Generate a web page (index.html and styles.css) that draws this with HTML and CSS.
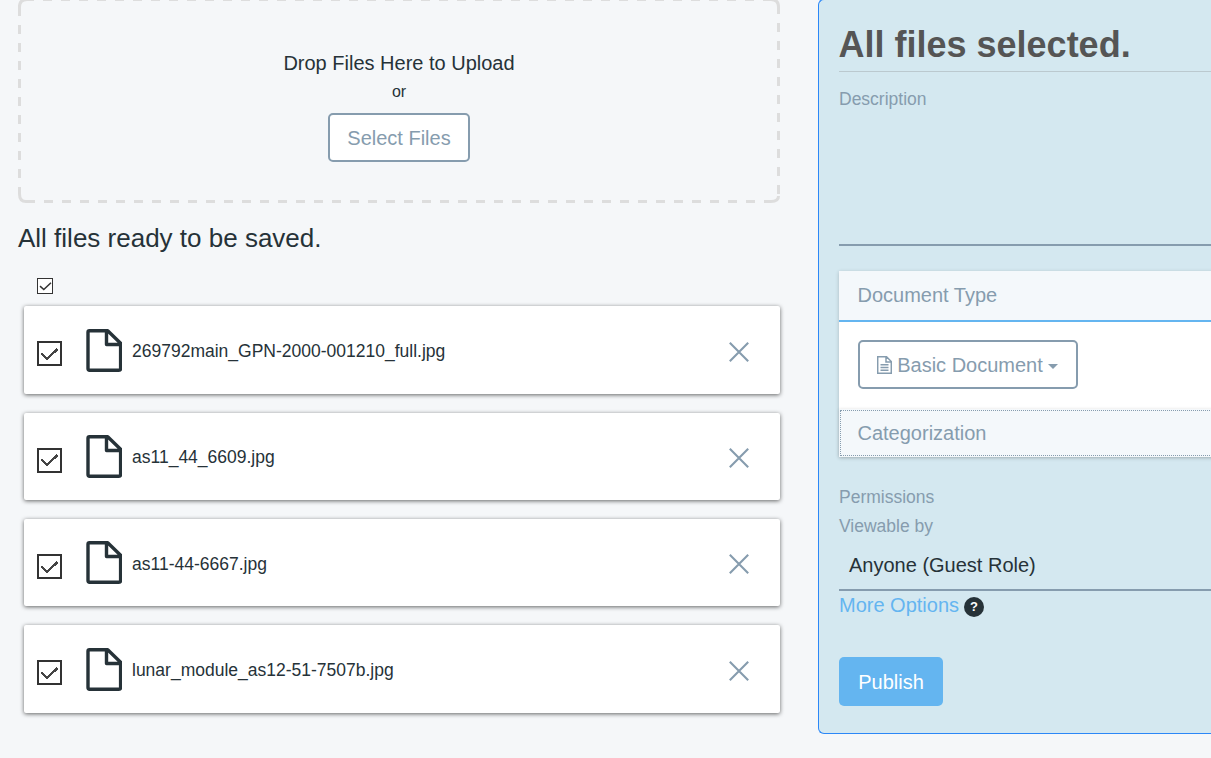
FILE: index.html
```html
<!DOCTYPE html>
<html lang="en">
<head>
<meta charset="utf-8">
<title>Upload files</title>
<link rel="stylesheet" href="styles.css">
</head>
<body>
<svg class="defs" width="0" height="0" aria-hidden="true">
  <symbol id="doc" viewBox="0 0 36 43">
    <path d="M3 1.700H21.700L34.600 14.300V39.500Q34.600 41.200 32.900 41.200H3.700Q2 41.200 2 39.500V3.200Q2 1.700 3.500 1.700ZM20.500 2V15.500H34" fill="none" stroke="#263238" stroke-width="3.400" stroke-linejoin="round"/>
  </symbol>
  <symbol id="tick" viewBox="0 0 19 13">
    <path d="M1.500 6L7 11L17.500 1" fill="none" stroke="#333" stroke-width="2.200"/>
  </symbol>
  <symbol id="tick-large" viewBox="0 0 19 13">
    <path d="M1.500 5.500L7 11L17.500 1" fill="none" stroke="#444" stroke-width="2.400" shape-rendering="crispEdges"/>
  </symbol>
  <symbol id="cross" viewBox="0 0 20 20">
    <path d="M.8.8L19.200 19.200M19.200.8L.8 19.200" fill="none" stroke="#869cae" stroke-width="2.100"/>
  </symbol>
</svg>
<div class="page">
  <main class="uploads">
    <section class="dropzone">
      <svg class="dashes" width="762" height="205" viewBox="0 0 762 205" fill="none" stroke="#ddd" stroke-width="3" aria-hidden="true">
        <path d="M1.500 7V9Q1.500 1.500 9 1.500H16M1.500 9V18M745 1.500H753Q760.500 1.500 760.500 9V16M1.500 189V196Q1.500 203.500 8 203.500M746 203.500H753Q760.500 203.500 760.500 198"/>
        <path d="M25 1.500H745M8 203.500H746M1.500 27V189M760.500 25V197" stroke-dasharray="9 9"/>
      </svg>
      <p class="drop-title">Drop Files Here to Upload</p>
      <p class="drop-or">or</p>
      <button class="btn">Select Files</button>
    </section>
    <h2 class="status">All files ready to be saved.</h2>
    <span class="check-all"><svg width="13" height="9"><use href="#tick"/></svg></span>
    <ul class="files">
      <li class="file"><span class="check"><svg width="19" height="13"><use href="#tick-large"/></svg></span><svg class="doc" width="36" height="43"><use href="#doc"/></svg><span class="name">269792main_GPN-2000-001210_full.jpg</span><svg class="remove" width="20" height="20"><use href="#cross"/></svg></li>
      <li class="file"><span class="check"><svg width="19" height="13"><use href="#tick-large"/></svg></span><svg class="doc" width="36" height="43"><use href="#doc"/></svg><span class="name">as11_44_6609.jpg</span><svg class="remove" width="20" height="20"><use href="#cross"/></svg></li>
      <li class="file"><span class="check"><svg width="19" height="13"><use href="#tick-large"/></svg></span><svg class="doc" width="36" height="43"><use href="#doc"/></svg><span class="name">as11-44-6667.jpg</span><svg class="remove" width="20" height="20"><use href="#cross"/></svg></li>
      <li class="file"><span class="check"><svg width="19" height="13"><use href="#tick-large"/></svg></span><svg class="doc" width="36" height="43"><use href="#doc"/></svg><span class="name">lunar_module_as12-51-7507b.jpg</span><svg class="remove" width="20" height="20"><use href="#cross"/></svg></li>
    </ul>
  </main>
  <aside class="panel">
    <h1 class="panel-title">All files selected.</h1>
    <div class="description">Description</div>
    <div class="accordion">
      <div class="acc-head">Document Type</div>
      <div class="acc-body">
        <button class="btn type-btn">
          <svg width="15" height="18" viewBox="0 0 15 18" fill="none" stroke="#869cae" stroke-width="1.500"><path d="M.7.700H9.500L14.300 5.500V17.300H.7ZM9 .7V6H14.300M3.500 8.700H11.500M3.500 11.500H11.500M3.500 14.300H11.500"/></svg>
          <span>Basic Document</span>
          <svg class="caret" width="10" height="5" viewBox="0 0 10 5"><path d="M0 0H10L5 5Z" fill="#869cae"/></svg>
        </button>
      </div>
      <div class="acc-head focused">Categorization</div>
    </div>
    <div class="label">Permissions</div>
    <div class="label">Viewable by</div>
    <div class="select">Anyone (Guest Role)</div>
    <div class="more"><a class="link">More Options</a><span class="help">?</span></div>
    <button class="btn publish">Publish</button>
  </aside>
</div>
</body>
</html>
```
FILE: styles.css
```css
* { box-sizing: border-box; }
body {
  margin: 0;
  background: #f5f7f9;
  color: #263238;
  font-family: "Liberation Sans", Arial, sans-serif;
  font-size: 20px;
  overflow: hidden;
}
p, h1, h2, ul { margin: 0; padding: 0; }
.defs { position: absolute; }
svg { display: block; flex: none; }
.page {
  display: flex;
  gap: 38px;
  height: 758px;
  padding-left: 18px;
}
.uploads { width: 762px; flex: none; }

.dropzone {
  position: relative;
  display: flex;
  flex-direction: column;
  align-items: center;
  height: 203px;
  padding-top: 50px;
}
.dashes { position: absolute; left: 0; top: -2px; }
.drop-title { line-height: 26px; }
.drop-or { margin-top: 5px; font-size: 16px; line-height: 22px; }
.btn {
  display: flex;
  align-items: center;
  justify-content: center;
  height: 49px;
  padding: 2px 0 0;
  border: 2px solid #869cae;
  border-radius: 5px;
  background: #fff;
  color: #869cae;
  font: 20px "Liberation Sans", Arial, sans-serif;
}
.dropzone .btn { width: 142px; margin-top: 10px; }

.status {
  margin-top: 20px;
  font-size: 26px;
  font-weight: 400;
  line-height: 30px;
}
.check-all, .check {
  display: flex;
  align-items: center;
  justify-content: center;
  border: 2px solid #333;
  background: #fff;
}
.check-all {
  width: 16px;
  height: 16px;
  margin: 25px 0 0 19px;
  border-width: 1px;
}
.files {
  display: flex;
  flex-direction: column;
  gap: 18.83px;
  margin-top: 12.2px;
  padding-left: 6px;
  list-style: none;
}
.file {
  display: flex;
  align-items: center;
  height: 87.5px;
  padding: 0 31px 0 13px;
  border-radius: 2px;
  background: #fff;
  box-shadow: 0 1px 4px rgba(0, 0, 0, .6);
}
.check { width: 25px; height: 25px; margin: 8px 24px 0 0; }
.check svg { margin-top: 1px; }
.doc { margin-top: .6px; }
.name { flex: 1; margin-left: 10px; font-size: 17.5px; line-height: 24px; margin-top: 2px; }
.remove { margin-top: 3.6px; }

.panel {
  flex: 1;
  height: 735px;
  margin-top: -1px;
  padding: 24px 0 0 20px;
  border: 1px solid #2b87f7;
  border-right: 0;
  border-radius: 6px 0 0 6px;
  background: #d4e8f0;
}
.panel-title {
  height: 48px;
  border-bottom: 1px solid #bbc9cf;
  color: #555;
  font-size: 36px;
  line-height: 41px;
  text-indent: -.5px;
}
.description {
  height: 174px;
  padding-top: 17px;
  border-bottom: 2px solid #869cae;
  color: #869cae;
  font-size: 17.5px;
  line-height: 20px;
}
.accordion {
  height: 186px;
  margin: 25px -10px 0 0;
  background: #fff;
  box-shadow: 0 1px 4px rgba(0, 0, 0, .2);
}
.acc-head {
  height: 51px;
  padding-left: 18.500px;
  border-bottom: 2px solid #64b5f0;
  background: #f4f8fb;
  color: #869cae;
  line-height: 48px;
}
.acc-body { height: 87px; padding: 18px 0 0 19px; }
.acc-head.focused {
  height: 48px;
  padding-left: 18.500px;
  border-bottom: 0;
  line-height: 48px;
  outline: 1px dotted #869cae;
  outline-offset: -2px;
  box-shadow: 0 0 3px rgba(0, 0, 0, .12);
}
.type-btn { width: 220px; }
.type-btn > svg:first-child { margin: -2px 0 0 -1px; }
.type-btn span { margin: 0 5px; }
.caret { margin-top: 2px; }
.label {
  height: 29px;
  color: #869cae;
  font-size: 17.5px;
  line-height: 29px;
}
.accordion + .label { margin-top: 26px; }
.select {
  height: 50px;
  padding-left: 10px;
  border-bottom: 2px solid #869cae;
  line-height: 49px;
}
.more { display: flex; gap: 5px; height: 30px; line-height: 28px; }
.link { color: #64b5f0; }
.help {
  width: 20px;
  height: 20px;
  margin-top: 6px;
  border-radius: 50%;
  background: #263238;
  color: #fff;
  font-size: 13px;
  font-weight: 700;
  line-height: 20px;
  text-align: center;
}
.publish {
  width: 104px;
  margin-top: 36px;
  border: 0;
  background: #64b5f0;
  color: #fff;
}
```
